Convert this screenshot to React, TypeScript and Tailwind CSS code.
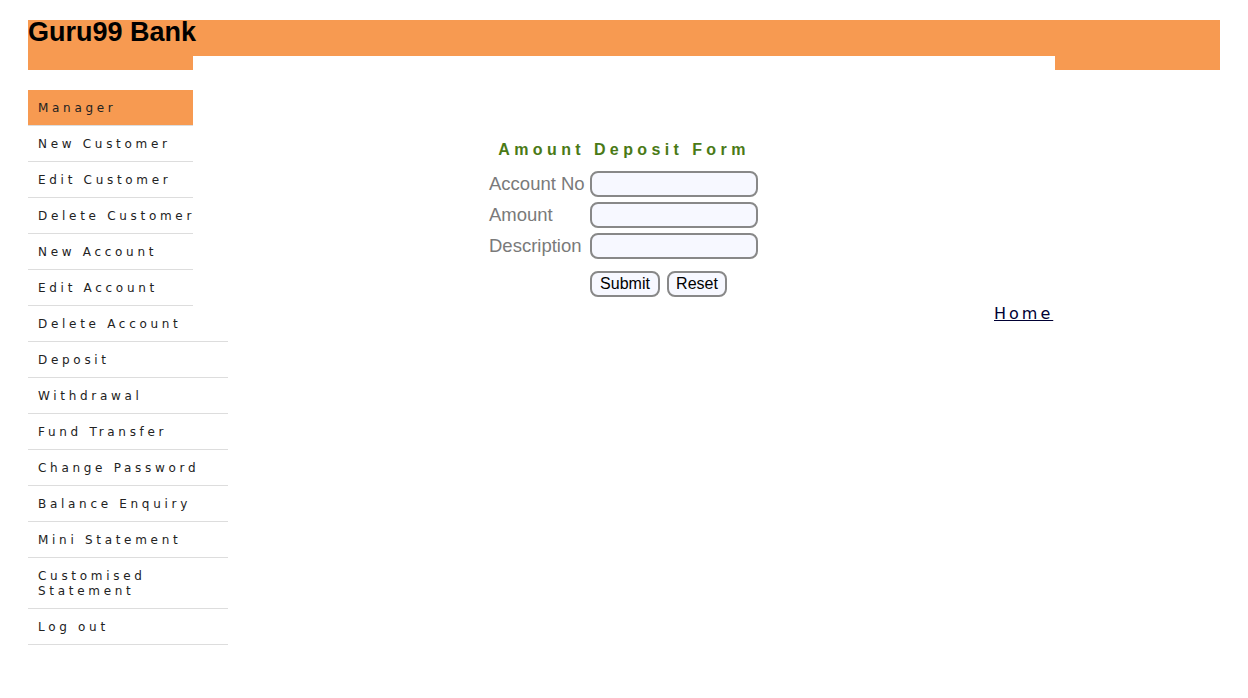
import React from 'react';

// --- Sidebar items ---
const menuTop = ['New Customer', 'Edit Customer', 'Delete Customer', 'New Account', 'Edit Account', 'Delete Account'];
const menuBottom = ['Deposit', 'Withdrawal', 'Fund Transfer', 'Change Password', 'Balance Enquiry', 'Mini Statement', 'Customised Statement', 'Log out'];

const itemCls = "block border-t border-[#dddddd] px-[10px] pt-[11px] pb-[9px] leading-[15px] text-[12px] tracking-[3.7px] text-[#222222] whitespace-normal";

const Field = ({ label }: { label: string }) => (
    <div className="flex items-center h-[26px]">
        <label className="w-[101px] text-[18.5px] text-[#7a7a7a] leading-none whitespace-nowrap">{label}</label>
        <input className="w-[168px] h-[26px] rounded-[8px] border-2 border-[#888888] bg-[#f7f8ff] outline-none" />
    </div>
);

export default function App() {
    return (
        <div className="min-h-[698px] bg-white px-[28px] pt-[20px] font-['Liberation_Sans',Arial,sans-serif]">
            {/* Header */}
            <div className="flex items-start">
                <div className="w-[165px] h-[50px] bg-[#f79a51]">
                    <h2 className="relative z-10 -mt-px text-[27px] leading-none font-bold text-black whitespace-nowrap">Guru99 Bank</h2>
                </div>
                <div className="flex-1 h-[36px] bg-[#f79a51]" />
                <div className="w-[165px] h-[50px] bg-[#f79a51]" />
            </div>

            <div className="flex mt-[20px]">
                {/* Sidebar */}
                <ul className="w-[200px] shrink-0 font-['DejaVu_Sans',sans-serif]">
                    <li className="w-[165px] h-[35px] bg-[#f79a51] px-[10px] pt-[11px] pb-[9px] leading-[15px] text-[12px] tracking-[3.7px] text-[#222222]">Manager</li>
                    {menuTop.map((m) => (
                        <li key={m} className="w-[165px]">
                            <a className={itemCls + " whitespace-nowrap"}>{m}</a>
                        </li>
                    ))}
                    {menuBottom.map((m, i) => (
                        <li key={m} className={i === menuBottom.length - 1 ? "border-b border-[#dddddd]" : ""}>
                            <a className={itemCls}>{m === 'Customised Statement' ? <>Customised<br />Statement</> : m}</a>
                        </li>
                    ))}
                </ul>

                {/* Main */}
                <div className="flex-1 pt-[50px]">
                    <div className="ml-[261px] w-[270px]">
                        <p className="text-center text-[16px] leading-[20px] font-bold tracking-[4.4px] text-[#4a7a16]">Amount Deposit Form</p>
                        <div className="mt-[11px] flex flex-col gap-[5px]">
                            <Field label="Account No" />
                            <Field label="Amount" />
                            <Field label="Description" />
                        </div>
                        <div className="mt-[12px] ml-[101px] flex gap-[7px]">
                            <button className="w-[70px] h-[26px] rounded-[8px] border-2 border-[#888888] bg-[#f7f8ff] text-[16px] leading-none text-black">Submit</button>
                            <button className="w-[60px] h-[26px] rounded-[8px] border-2 border-[#888888] bg-[#f7f8ff] text-[16px] leading-none text-black">Reset</button>
                        </div>
                    </div>
                    <a className="inline-block mt-[7px] ml-[766px] text-[16px] leading-[20px] tracking-[3px] text-[#000033] underline font-['DejaVu_Sans',sans-serif]">Home</a>
                </div>
            </div>
        </div>
    );
}
